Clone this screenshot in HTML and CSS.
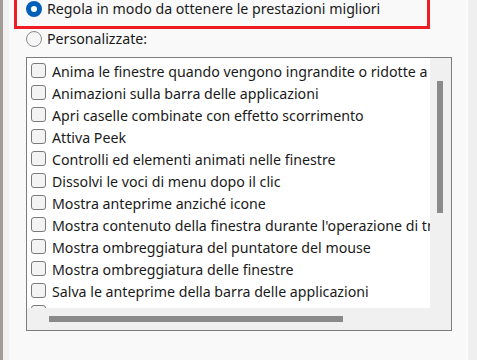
FILE: index.html
```html
<!DOCTYPE html>
<html lang="it">
<head>
<meta charset="utf-8">
<link rel="stylesheet" href="styles.css">
</head>
<body>
<div class="window">
  <div class="edge-left"></div>
  <div class="content">
    <div class="highlight">
      <label class="radio-row first">
        <span class="radio checked"></span>
        <span class="label">Regola in modo da ottenere le prestazioni migliori</span>
      </label>
    </div>
    <label class="radio-row second">
      <span class="radio"></span>
      <span class="label">Personalizzate:</span>
    </label>
    <div class="listbox">
      <div class="items">
        <div class="item"><span class="check"></span><span class="text">Anima le finestre quando vengono ingrandite o ridotte a icona</span></div>
        <div class="item"><span class="check"></span><span class="text">Animazioni sulla barra delle applicazioni</span></div>
        <div class="item"><span class="check"></span><span class="text">Apri caselle combinate con effetto scorrimento</span></div>
        <div class="item"><span class="check"></span><span class="text">Attiva Peek</span></div>
        <div class="item"><span class="check"></span><span class="text">Controlli ed elementi animati nelle finestre</span></div>
        <div class="item"><span class="check"></span><span class="text">Dissolvi le voci di menu dopo il clic</span></div>
        <div class="item"><span class="check"></span><span class="text">Mostra anteprime anziché icone</span></div>
        <div class="item"><span class="check"></span><span class="text">Mostra contenuto della finestra durante l'operazione di trascinamento</span></div>
        <div class="item"><span class="check"></span><span class="text">Mostra ombreggiatura del puntatore del mouse</span></div>
        <div class="item"><span class="check"></span><span class="text">Mostra ombreggiatura delle finestre</span></div>
        <div class="item"><span class="check"></span><span class="text">Salva le anteprime della barra delle applicazioni</span></div>
        <div class="item"><span class="check"></span><span class="text">Scorrimento uniforme delle caselle di riepilogo</span></div>
      </div>
      <div class="vscroll"><div class="vthumb"></div></div>
      <div class="hscroll"><div class="hthumb"></div></div>
      <div class="corner"></div>
    </div>
  </div>
  <div class="edge-right"></div>
</div>
</body>
</html>
```
FILE: styles.css
```css
html, body {
  margin: 0;
  padding: 0;
  background: #f9f9f9;
  width: 477px;
  height: 360px;
  overflow: hidden;
}
.window {
  display: flex;
  height: 360px;
  font-family: "Noto Sans", "Open Sans", sans-serif;
  font-size: 14.2px;
  color: #1a1a1a;
}
.edge-left {
  width: 3px;
  background: #a39d98;
  border-right: 6px solid #f1f1f1;
}
.content {
  width: 457px;
  display: flex;
  flex-direction: column;
}
.edge-right {
  width: 9px;
  background: #efefef;
  border-left: 2px solid #fdfdfd;
}
.highlight {
  margin-left: 5px;
  width: 410px;
  height: 26px;
  border: 3px solid #ee1c24;
  border-top: none;
}
.radio-row {
  display: flex;
  align-items: center;
  gap: 5px;
  height: 16px;
  white-space: nowrap;
}
.radio-row.first {
  margin-left: 9px;
  margin-top: 1px;
}
.radio-row.second {
  margin-left: 17px;
  margin-top: 2px;
}
.radio {
  box-sizing: border-box;
  width: 16px;
  height: 16px;
  border-radius: 50%;
  border: 1px solid #8b8b8b;
  background: #f6f6f6;
  flex: none;
}
.radio.checked {
  border: 5px solid #005fb8;
  background: #ffffff;
}
.label {
  line-height: 16px;
}
.listbox {
  margin-left: 17px;
  margin-top: 10px;
  width: 424px;
  border: 1px solid #7d7d7d;
  display: grid;
  grid-template-columns: 403px 21px;
  grid-template-rows: 250px 22px;
  background: #f0f0f0;
}
.items {
  background: #ffffff;
  overflow: hidden;
  padding-left: 4px;
}
.item {
  display: flex;
  align-items: flex-start;
  gap: 6px;
  height: 22px;
  white-space: nowrap;
}
.check {
  box-sizing: border-box;
  width: 15px;
  height: 15px;
  margin-top: 5px;
  border: 1px solid #7a7a7a;
  border-radius: 3px;
  background: #f3f3f3;
  flex: none;
}
.text {
  line-height: 27px;
}
.vscroll {
  background: #f0f0f0;
  padding-top: 23px;
  padding-left: 7px;
}
.vthumb {
  width: 6px;
  height: 132px;
  background: #8a8a8a;
}
.hscroll {
  background: #f0f0f0;
  padding-top: 8px;
  padding-left: 22px;
}
.hthumb {
  width: 294px;
  height: 6px;
  background: #8a8a8a;
}
.corner {
  background: #f0f0f0;
}
```
